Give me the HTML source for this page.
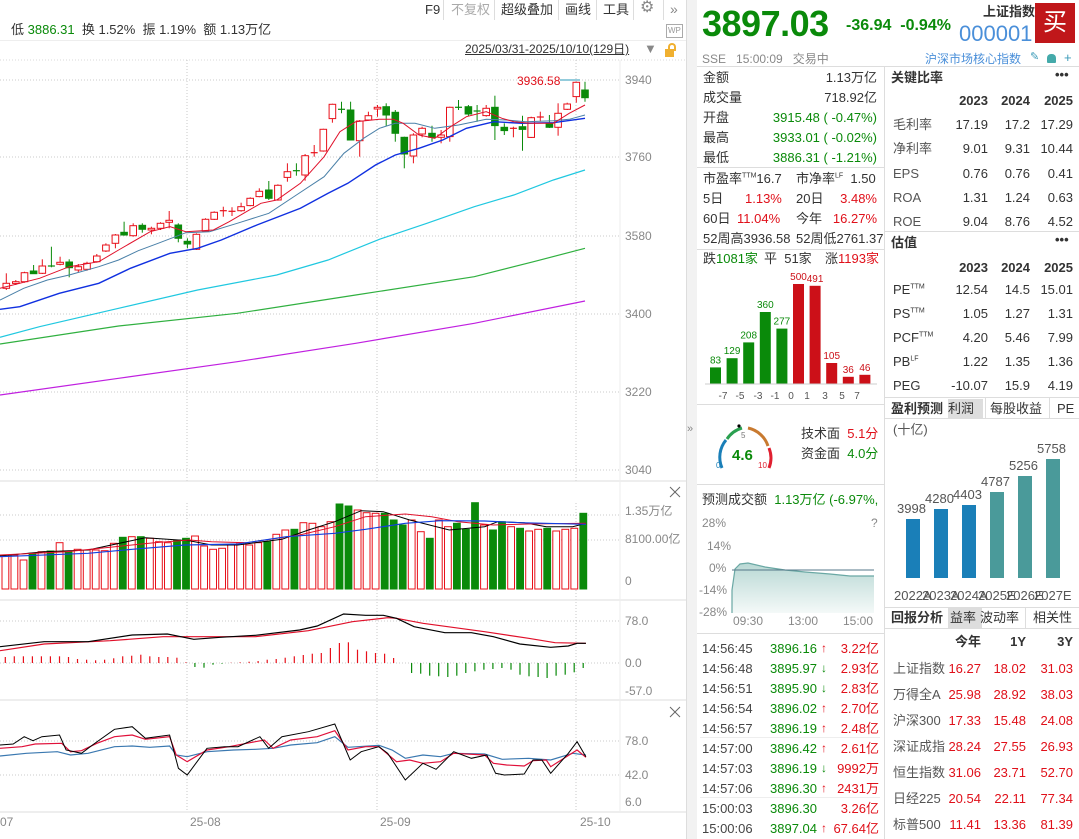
<!DOCTYPE html>
<html><head><meta charset="utf-8">
<style>
*{margin:0;padding:0;box-sizing:border-box}
body{width:1079px;height:839px;overflow:hidden;background:#fff;font-family:"Liberation Sans","Noto Sans CJK SC",sans-serif;font-size:13px;color:#333;position:relative}
.t{position:absolute;white-space:nowrap;line-height:1}
.r{text-align:right}
.g{color:#0a8a0a}.red{color:#e0101a}.gr{color:#888}
.hl{position:absolute;height:1px;background:#ddd}
.vl{position:absolute;width:1px;background:#ddd}
b{font-weight:bold}
</style></head><body>
<svg id="left" width="686" height="839" style="position:absolute;left:0;top:0"></svg>
<div style="position:absolute;left:686px;top:0;width:11px;height:839px;background:#f2f2f2;border-left:1px solid #ddd"></div>
<div class="t gr" style="left:687px;top:424px;font-size:11px">»</div>

<!-- left top text -->
<div class="t" style="left:425px;top:3px">F9</div>
<div class="t" style="left:451px;top:3px;color:#aaa">不复权</div>
<div class="t" style="left:501px;top:3px">超级叠加</div>
<div class="t" style="left:565px;top:3px">画线</div>
<div class="t" style="left:603px;top:3px">工具</div>
<div class="t gr" style="left:640px;top:0px;font-size:16px">⚙</div>
<div class="t gr" style="left:670px;top:2px;font-size:14px">»</div>
<div class="vl" style="left:443px;top:0;height:20px"></div><div class="vl" style="left:494px;top:0;height:20px"></div><div class="vl" style="left:558px;top:0;height:20px"></div><div class="vl" style="left:596px;top:0;height:20px"></div><div class="vl" style="left:633px;top:0;height:20px"></div><div class="vl" style="left:663px;top:0;height:20px"></div>
<div class="t" style="left:11px;top:23px">低 <span class="g">3886.31</span>&nbsp; 换 1.52%&nbsp; 振 1.19%&nbsp; 额 1.13万亿</div>
<div class="t" style="left:666px;top:24px;font-size:8px;color:#999;border:1px solid #aaa;padding:2px 1px">WP</div>
<div class="hl" style="left:0;top:40px;width:686px;background:#eee"></div>
<div class="t" style="left:465px;top:43px;font-size:12px;text-decoration:underline">2025/03/31-2025/10/10(129日)</div>
<div class="t" style="left:644px;top:42px;font-size:13px;color:#888">▼</div>
<div style="position:absolute;left:665px;top:49px;width:9px;height:8px;background:#f0b030"></div>
<div style="position:absolute;left:668px;top:43px;width:8px;height:8px;border:2px solid #f0b030;border-bottom:none;border-radius:4px 4px 0 0;"></div>
<div class="t red" style="left:517px;top:75px;font-size:12px">3936.58</div>
<div class="t gr" style="left:625px;top:74px;font-size:12px">3940</div>
<div class="t gr" style="left:625px;top:151px;font-size:12px">3760</div>
<div class="t gr" style="left:625px;top:230px;font-size:12px">3580</div>
<div class="t gr" style="left:625px;top:308px;font-size:12px">3400</div>
<div class="t gr" style="left:625px;top:386px;font-size:12px">3220</div>
<div class="t gr" style="left:625px;top:464px;font-size:12px">3040</div>
<div class="t gr" style="left:625px;top:505px;font-size:12px">1.35万亿</div>
<div class="t gr" style="left:625px;top:533px;font-size:12px">8100.00亿</div>
<div class="t gr" style="left:625px;top:575px;font-size:12px">0</div>
<div class="t gr" style="left:625px;top:615px;font-size:12px">78.0</div>
<div class="t gr" style="left:625px;top:657px;font-size:12px">0.0</div>
<div class="t gr" style="left:625px;top:685px;font-size:12px">-57.0</div>
<div class="t gr" style="left:625px;top:735px;font-size:12px">78.0</div>
<div class="t gr" style="left:625px;top:769px;font-size:12px">42.0</div>
<div class="t gr" style="left:625px;top:796px;font-size:12px">6.0</div>
<div class="t gr" style="left:0px;top:816px;font-size:12px">07</div>
<div class="t gr" style="left:190px;top:816px;font-size:12px">25-08</div>
<div class="t gr" style="left:380px;top:816px;font-size:12px">25-09</div>
<div class="t gr" style="left:580px;top:816px;font-size:12px">25-10</div>

<!-- right header -->
<div class="t g" style="left:702px;top:6px;font-size:36px;font-weight:bold;letter-spacing:-0.5px">3897.03</div>
<div class="t g" style="left:846px;top:18px;font-size:16px;font-weight:bold">-36.94&nbsp;&nbsp;-0.94%</div>
<div class="t" style="left:983px;top:5px;font-size:13px;font-weight:bold">上证指数</div>
<div class="t" style="left:959px;top:23px;font-size:22px;color:#4a8fd9">000001</div>
<div style="position:absolute;left:1035px;top:3px;width:40px;height:40px;background:#c0171a;color:#fff;font-size:24px;text-align:center;line-height:40px">买</div>
<div class="t gr" style="left:702px;top:53px;font-size:12px">SSE&nbsp;&nbsp; 15:00:09&nbsp;&nbsp; 交易中</div>
<div class="t" style="left:925px;top:53px;font-size:12px;color:#4a8fd9">沪深市场核心指数</div>
<div class="t" style="left:1030px;top:52px;font-size:11px;color:#3a9ab8">✎</div>
<div style="position:absolute;left:1047px;top:54px;width:9px;height:9px;background:#4aa;border-radius:4px 4px 1px 1px"></div>
<div class="t" style="left:1064px;top:51px;font-size:13px;color:#3a9ab8">+</div>
<div class="hl" style="left:697px;top:66px;width:382px"></div>
<div class="vl" style="left:884px;top:66px;height:773px"></div>

<!-- left sub-col -->
<div class="t" style="left:703px;top:71px">金额</div><div class="t r" style="right:202px;top:71px">1.13万亿</div>
<div class="t" style="left:703px;top:91px">成交量</div><div class="t r" style="right:202px;top:91px">718.92亿</div>
<div class="t" style="left:703px;top:111px">开盘</div><div class="t r g" style="right:202px;top:111px">3915.48 ( -0.47%)</div>
<div class="t" style="left:703px;top:131px">最高</div><div class="t r g" style="right:202px;top:131px">3933.01 ( -0.02%)</div>
<div class="t" style="left:703px;top:151px">最低</div><div class="t r g" style="right:202px;top:151px">3886.31 ( -1.21%)</div>
<div class="hl" style="left:697px;top:167px;width:187px"></div>
<div class="t" style="left:703px;top:172px">市盈率<sup style="font-size:7px">TTM</sup>16.7</div><div class="t" style="left:796px;top:172px">市净率<sup style="font-size:7px">LF</sup>&nbsp; 1.50</div>
<div class="t" style="left:703px;top:192px">5日</div><div class="t red" style="left:745px;top:192px">1.13%</div><div class="t" style="left:796px;top:192px">20日</div><div class="t r red" style="right:202px;top:192px">3.48%</div>
<div class="t" style="left:703px;top:212px">60日</div><div class="t red" style="left:737px;top:212px">11.04%</div><div class="t" style="left:796px;top:212px">今年</div><div class="t r red" style="right:202px;top:212px">16.27%</div>
<div class="t" style="left:703px;top:232px">52周高3936.58</div><div class="t" style="left:796px;top:232px">52周低2761.37</div>
<div class="hl" style="left:697px;top:249px;width:187px"></div>
<div class="t" style="left:703px;top:252px">跌<span class="g">1081家</span></div><div class="t" style="left:764px;top:252px">平&nbsp; 51家</div><div class="t" style="left:825px;top:252px">涨<span class="red">1193家</span></div>
<svg width="187" height="145" style="position:absolute;left:697px;top:268px" id="dist"></svg>
<div class="hl" style="left:697px;top:404px;width:187px"></div>
<svg width="70" height="70" style="position:absolute;left:712px;top:420px">
<path d="M10 48 A27 27 0 0 1 14 20" stroke="#1a7fb8" stroke-width="3" fill="none"/>
<path d="M15 19 A27 27 0 0 1 30 8" stroke="#2aa050" stroke-width="3" fill="none"/>
<path d="M36 8 A27 27 0 0 1 56 26" stroke="#c87a30" stroke-width="3" fill="none"/>
<path d="M57 28 A27 27 0 0 1 57 48" stroke="#e02030" stroke-width="3" fill="none"/>
<circle cx="27" cy="6" r="1.6" fill="#000"/>
<text x="29" y="18" font-size="8" fill="#777">5</text>
<text x="4" y="48" font-size="8" fill="#1a7fb8">0</text>
<text x="46" y="48" font-size="8" fill="#e02030">10</text>
<text x="20" y="40" font-size="15" font-weight="bold" fill="#0a8a0a" font-family="Liberation Sans">4.6</text>
</svg>
<div class="t" style="left:801px;top:427px">技术面&nbsp; <span class="red">5.1分</span></div>
<div class="t" style="left:801px;top:447px">资金面&nbsp; <span class="g">4.0分</span></div>
<div class="hl" style="left:697px;top:484px;width:187px"></div>
<div class="t" style="left:702px;top:493px">预测成交额&nbsp; <span class="g">1.13万亿 (-6.97%,</span></div>
<div class="t gr" style="left:702px;top:517px;font-size:12px">28%</div><div class="t gr" style="left:871px;top:517px;font-size:12px">?</div>
<div class="t gr" style="left:707px;top:540px;font-size:12px">14%</div>
<div class="t gr" style="left:709px;top:562px;font-size:12px">0%</div>
<div class="t gr" style="left:699px;top:584px;font-size:12px">-14%</div>
<div class="t gr" style="left:699px;top:606px;font-size:12px">-28%</div>
<svg width="150" height="60" style="position:absolute;left:730px;top:555px">
<defs><linearGradient id="ag" x1="0" y1="0" x2="0" y2="1"><stop offset="0" stop-color="#b8d8d4"/><stop offset="1" stop-color="#f4f9f8"/></linearGradient></defs>
<line x1="12" y1="15" x2="144" y2="15" stroke="#99a" stroke-width="0.6" stroke-dasharray="1 2" transform="translate(0,-23)"/>
<path d="M2 58 L2 35 L5 14 L10 9 L18 8 L35 12 L55 15 L75 17 L100 19 L120 21 L144 21 L144 58 Z" fill="url(#ag)"/>
<path d="M2 58 L2 35 L5 14 L10 9 L18 8 L35 12 L55 15 L75 17 L100 19 L120 21 L144 21" fill="none" stroke="#6aa8a4" stroke-width="1.2"/>
<line x1="2" y1="15" x2="144" y2="15" stroke="#557788" stroke-width="1"/>
</svg>
<div class="t gr" style="left:733px;top:615px;font-size:12px">09:30</div>
<div class="t gr" style="left:788px;top:615px;font-size:12px">13:00</div>
<div class="t gr" style="left:843px;top:615px;font-size:12px">15:00</div>
<div class="hl" style="left:697px;top:633px;width:187px"></div>
<div id="trades"></div>
<div class="hl" style="left:700px;top:737px;width:180px;background:#eee"></div>
<div class="hl" style="left:700px;top:797px;width:180px;background:#eee"></div>

<!-- right col -->
<div class="t" style="left:891px;top:71px;font-weight:bold">关键比率</div><div class="t" style="left:1055px;top:68px;font-weight:bold">•••</div>
<div id="rc"></div>
<div class="hl" style="left:885px;top:231px;width:194px"></div>
<div class="t" style="left:891px;top:236px;font-weight:bold">估值</div><div class="t" style="left:1055px;top:233px;font-weight:bold">•••</div>
<div class="hl" style="left:885px;top:397px;width:194px"></div>
<div style="position:absolute;left:948px;top:399px;width:35px;height:19px;background:#ddd"></div>
<div class="t" style="left:891px;top:402px;font-weight:bold">盈利预测</div><div class="t" style="left:948px;top:402px">利润</div><div class="t" style="left:990px;top:402px">每股收益</div><div class="t" style="left:1057px;top:402px">PE</div>
<div class="vl" style="left:985px;top:398px;height:20px"></div><div class="vl" style="left:1049px;top:398px;height:20px"></div>
<div class="hl" style="left:885px;top:418px;width:194px"></div>
<div class="t" style="left:893px;top:423px;color:#555">(十亿)</div>
<div id="bars"></div>
<div class="hl" style="left:885px;top:607px;width:194px"></div>
<div style="position:absolute;left:948px;top:608px;width:34px;height:20px;background:#ddd"></div>
<div class="t" style="left:891px;top:611px;font-weight:bold">回报分析</div><div class="t" style="left:950px;top:611px">益率</div><div class="t" style="left:980px;top:611px">波动率</div><div class="t" style="left:1033px;top:611px">相关性</div>
<div class="vl" style="left:1025px;top:608px;height:20px"></div>
<div class="hl" style="left:885px;top:628px;width:194px"></div>
<div id="ret"></div>

<script>
var L=document.getElementById('left'),S='';
function ln(x1,y1,x2,y2,c,w,d){S+='<line x1="'+x1+'" y1="'+y1+'" x2="'+x2+'" y2="'+y2+'" stroke="'+c+'" stroke-width="'+(w||1)+'"'+(d?' stroke-dasharray="'+d+'"':'')+'/>';}
function pl(pts,fx,fy,c,w){S+='<polyline fill="none" stroke="'+c+'" stroke-width="'+(w||1)+'" points="'+pts.map(function(p,i){return i%2==0?fx(p):fy(p)}).reduce(function(a,v,i){return a+(i%2==0?' '+v:','+v)},'')+'"/>';}
var D='1 2';
// grids
[80,157,236,314,392,470].forEach(function(y){ln(0,y,620,y,'#bbb',0.8,D)});
ln(0,60,686,60,'#ccc',0.8,D);
[187,377,576].forEach(function(x){ln(x,60,x,481,'#bbb',0.8,D);ln(x,503,x,812,'#bbb',0.8,D)});
[515,540,621,663,741,775].forEach(function(y){ln(0,y,620,y,'#bbb',0.8,D)});
[481,600,700,812].forEach(function(y){ln(0,y,686,y,'#ddd',1)});
ln(620,60,620,812,'#eee',1);
// x icons
[[675,492],[675,712]].forEach(function(p){ln(p[0]-5,p[1]-5,p[0]+5,p[1]+5,'#666',1);ln(p[0]-5,p[1]+5,p[0]+5,p[1]-5,'#666',1)});
var cx=function(v){return (v/2.53).toFixed(1)},cy=function(v){return (80+v/3).toFixed(1)};
// candles: x, bodyTop, bodyBot, wickTop, wickBot, red?
var C=[[16,610,625,580,630,1],[40,605,610,600,615,1],[62,578,605,575,608,1],[85,573,581,555,581,0],[107,558,580,538,582,1],[130,558,560,500,562,0],[152,547,553,530,556,1],[175,546,563,538,592,0],[198,560,570,552,578,1],[220,550,568,545,572,1],[245,528,545,522,548,1],[268,495,513,490,516,1],[292,465,490,462,505,1],[314,457,465,425,467,0],[337,437,467,430,470,1],[360,436,448,430,458,0],[383,445,450,440,463,1],[406,430,445,427,450,1],[428,421,427,393,445,1],[451,435,475,430,487,0],[474,484,492,475,505,0],[497,463,508,460,510,1],[520,418,453,415,455,1],[542,397,418,394,420,1],[565,392,394,380,410,1],[587,394,396,382,408,1],[610,380,392,368,395,1],[633,355,377,352,379,1],[656,334,350,325,352,1],[680,330,355,303,360,0],[703,316,360,313,362,1],[727,275,292,250,305,1],[750,272,274,250,287,0],[772,227,285,222,302,1],[795,218,222,195,230,1],[818,148,213,146,215,1],[841,73,116,71,128,1],[864,88,90,65,100,0],[887,90,180,65,180,0],[910,123,182,120,230,1],[932,107,120,95,122,1],[955,82,87,75,110,1],[977,80,105,70,138,0],[1000,97,160,90,185,0],[1023,172,222,170,265,0],[1046,165,228,160,250,1],[1068,145,162,140,172,1],[1093,160,172,137,185,0],[1116,165,172,150,190,1],[1138,82,170,80,185,1],[1160,82,86,60,90,0],[1185,80,102,75,108,0],[1207,93,97,75,125,0],[1230,85,107,75,110,1],[1252,82,137,47,180,0],[1276,142,152,130,165,0],[1299,145,148,140,172,1],[1322,140,148,107,212,0],[1344,113,172,110,174,1],[1367,111,113,95,125,1],[1390,130,142,105,144,0],[1412,100,142,70,167,1],[1435,72,88,68,90,1],[1458,7,50,5,68,1],[1480,30,53,5,65,0]];
C.forEach(function(c){var x=c[0]/2.53,col=c[5]?'#e8101a':'#0a8a0a';
ln(x.toFixed(1),cy(c[3]),x.toFixed(1),cy(c[4]),col,1);
var t=80+c[1]/3,b=80+c[2]/3,h=Math.max(b-t,1);
if(h<1.5){ln((x-3.5).toFixed(1),t.toFixed(1),(x+3.5).toFixed(1),t.toFixed(1),col,1.2)}
else S+='<rect x="'+(x-3.3).toFixed(1)+'" y="'+t.toFixed(1)+'" width="6.6" height="'+h.toFixed(1)+'" fill="'+(c[5]?'#fff':col)+'" stroke="'+col+'" stroke-width="1"/>';});
function P(a){return a}
pl([0,945,300,895,600,845,900,790,1200,730,1480,663],cx,cy,'#c020e0',1.2);
pl([0,792,300,738,600,700,900,645,1200,590,1350,545,1480,505],cx,cy,'#30b040',1.2);
pl([0,772,100,740,300,685,500,630,700,585,830,540,960,478,1080,430,1200,380,1300,345,1400,300,1480,270],cx,cy,'#20c8e0',1.2);
pl([0,688,50,680,150,640,250,610,330,565,430,520,500,505,560,480,650,435,760,385,830,340,880,310,950,255,1000,225,1060,205,1120,180,1180,145,1250,125,1320,130,1400,128,1480,115],cx,cy,'#1030e0',1.4);
pl([0,660,60,625,120,600,175,585,250,560,300,540,350,512,400,490,470,458,530,455,600,430,680,400,750,345,820,290,870,220,920,175,960,145,1000,130,1050,130,1100,145,1160,135,1230,118,1280,120,1330,125,1400,122,1440,118,1480,105],cx,cy,'#4a80a8',1);
pl([0,625,100,595,175,560,250,545,300,510,380,455,430,440,470,455,540,450,580,425,660,370,700,360,760,310,820,230,860,155,900,125,960,118,995,118,1020,130,1060,165,1100,175,1140,140,1180,110,1230,95,1270,115,1300,125,1340,130,1400,130,1440,100,1480,75],cx,cy,'#e0102a',1);
ln(560,80,580,80,'#2a9ab8',1);
// volume
var bx=function(v){return (v/2.27).toFixed(1)},by=function(v){return (470+v/3).toFixed(1)};
var V=[255,255,270,250,245,243,218,245,238,240,240,242,220,202,200,200,205,215,218,210,205,198,228,238,235,225,218,225,218,215,193,180,178,158,160,170,155,102,108,120,128,130,130,150,165,150,185,205,150,170,160,178,98,165,180,155,170,175,183,178,175,183,178,175,130,145];
C.forEach(function(c,i){var x=5.3+9.03*i-3.3,t=470+V[i]/3,col=c[5]?'#e8101a':'#0a8a0a';
S+='<rect x="'+x.toFixed(1)+'" y="'+t.toFixed(1)+'" width="6.8" height="'+(589-t).toFixed(1)+'" fill="'+(c[5]?'#fff':col)+'" stroke="'+col+'" stroke-width="1"/>';});
pl([0,258,100,245,200,240,330,203,430,212,480,225,540,225,640,208,700,180,760,155,820,122,870,125,930,150,1020,180,1100,170,1130,155,1190,158,1240,170,1300,170,1330,160],bx,by,'#000',1);
pl([0,255,150,245,250,232,350,218,430,210,480,215,560,218,680,195,760,170,830,140,920,132,980,140,1040,155,1120,165,1200,162,1330,160],bx,by,'#e0102a',1);
pl([0,260,200,250,300,238,420,225,540,222,650,200,760,190,830,178,920,160,1000,152,1100,153,1180,158,1330,163],bx,by,'#1040e0',1.2);
// macd hist
var H=[18,20,20,20,20,20,20,18,12,10,8,10,14,20,22,25,20,18,18,16,2,-12,-14,-5,-2,1,2,4,6,10,12,16,20,24,28,30,45,60,62,40,35,30,28,15,0,-30,-32,-38,-40,-42,-38,-30,-25,-20,-18,-15,-20,-35,-40,-42,-45,-38,-35,-28,-15];
H.forEach(function(h,i){var x=(5.3+9.03*i).toFixed(1);if(h)ln(x,663,x,(663-h/3).toFixed(1),h>0?'#e8101a':'#0a8a0a',1.2)});
pl([0,542,100,522,250,512,370,500,440,500,580,500,700,482,800,455,880,443,900,445,960,460,1100,485,1200,505,1260,518,1330,520],bx,by,'#e0102a',1.2);
pl([0,530,100,515,200,515,300,495,380,492,440,508,500,502,580,496,680,480,720,468,780,432,830,436,870,436,900,445,940,470,1010,488,1070,488,1120,500,1180,522,1250,532,1290,528,1310,520,1330,520],bx,by,'#000',1.2);
// kdj
pl([0,858,60,850,130,845,160,855,200,850,260,830,300,828,340,832,385,828,400,855,425,860,470,845,530,840,580,838,620,835,660,825,720,818,760,800,790,832,860,826,890,840,920,865,960,855,1000,860,1030,850,1100,852,1140,868,1200,865,1250,870,1300,850,1330,855],bx,by,'#3a78b0',1.2);
pl([0,835,50,830,80,822,140,820,160,845,185,842,220,820,260,800,300,795,330,808,385,800,400,855,425,875,470,840,520,830,560,820,600,810,620,835,660,810,720,800,760,782,790,840,830,830,860,830,900,875,930,870,960,880,1000,875,1030,850,1100,855,1120,880,1150,885,1190,888,1210,872,1240,870,1250,890,1300,848,1310,840,1330,862],bx,by,'#e0103a',1.2);
pl([0,825,30,822,55,800,75,812,95,800,135,795,150,840,185,850,210,825,260,778,300,770,330,805,385,795,405,895,425,915,470,835,510,830,540,830,590,800,610,835,640,800,700,785,760,762,795,870,820,845,860,830,880,850,920,930,960,880,990,898,1030,845,1070,865,1105,855,1125,910,1145,915,1190,912,1210,870,1230,870,1250,910,1290,850,1310,815,1330,860],bx,by,'#000',1);
L.innerHTML=S;
// dist
var d='',vals=[83,129,208,360,277,500,491,105,36,46],labs=['-7','-5','-3','-1','0','1','3','5','7'];
vals.forEach(function(v,i){var x=13+16.6*i,h=v/5,col=i<5?'#0a8a0a':'#cc1018';
d+='<rect x="'+x+'" y="'+(116-h)+'" width="11" height="'+h+'" fill="'+col+'"/><text x="'+(x+5.5)+'" y="'+(112-h)+'" font-size="10" text-anchor="middle" fill="'+col+'" font-family="Liberation Sans">'+v+'</text>';});
d+='<line x1="8" y1="116" x2="180" y2="116" stroke="#ccc"/>';
[26,43,61,78,94,110,128,145,160].forEach(function(x,i){d+='<text x="'+x+'" y="131" font-size="10" text-anchor="middle" fill="#555" font-family="Liberation Sans">'+labs[i]+'</text>'});
document.getElementById('dist').innerHTML=d;
// trades
var T=[['14:56:45','3896.16','↑','3.22亿'],['14:56:48','3895.97','↓','2.93亿'],['14:56:51','3895.90','↓','2.83亿'],['14:56:54','3896.02','↑','2.70亿'],['14:56:57','3896.19','↑','2.48亿'],['14:57:00','3896.42','↑','2.61亿'],['14:57:03','3896.19','↓','9992万'],['14:57:06','3896.30','↑','2431万'],['15:00:03','3896.30','','3.26亿'],['15:00:06','3897.04','↑','67.64亿']];
var ys=[642,662,682,702,722,742,762,782,802,822],h='';
T.forEach(function(r,i){h+='<div class="t" style="left:702px;top:'+ys[i]+'px;font-size:13px;color:#444">'+r[0]+'</div><div class="t g" style="left:770px;top:'+ys[i]+'px;width:50px;overflow:hidden">'+r[1]+'</div><div class="t" style="left:821px;top:'+ys[i]+'px;font-size:12px;font-weight:bold;color:'+(r[2]=='↑'?'#e0101a':'#0a8a0a')+'">'+r[2]+'</div><div class="t r red" style="right:200px;top:'+ys[i]+'px">'+r[3]+'</div>';});
document.getElementById('trades').innerHTML=h;
// ratios
function tab(rows,y0,dy,cols,hdr,hy,lc,vc){var s='';hdr.forEach(function(t,j){s+='<div class="t r" style="right:'+(1079-cols[j])+'px;top:'+hy+'px;font-weight:bold">'+t+'</div>'});
rows.forEach(function(r,i){s+='<div class="t" style="left:893px;top:'+(y0+dy*i)+'px;color:'+lc+'">'+r[0]+'</div>';for(var j=1;j<4;j++)s+='<div class="t r" style="right:'+(1079-cols[j-1])+'px;top:'+(y0+dy*i)+'px;color:'+vc+'">'+r[j]+'</div>'});return s;}
var rc=tab([['毛利率','17.19','17.2','17.29'],['净利率','9.01','9.31','10.44'],['EPS','0.76','0.76','0.41'],['ROA','1.31','1.24','0.63'],['ROE','9.04','8.76','4.52']],118,24.3,[988,1030,1073],['2023','2024','2025'],94,'#555','#333');
rc+=tab([['PE<sup style="font-size:7px">TTM</sup>','12.54','14.5','15.01'],['PS<sup style="font-size:7px">TTM</sup>','1.05','1.27','1.31'],['PCF<sup style="font-size:7px">TTM</sup>','4.20','5.46','7.99'],['PB<sup style="font-size:7px">LF</sup>','1.22','1.35','1.36'],['PEG','-10.07','15.9','4.19']],283,24,[988,1030,1073],['2023','2024','2025'],261,'#333','#333');
document.getElementById('rc').innerHTML=rc;
document.getElementById('ret').innerHTML=tab([['上证指数','16.27','18.02','31.03'],['万得全A','25.98','28.92','38.03'],['沪深300','17.33','15.48','24.08'],['深证成指','28.24','27.55','26.93'],['恒生指数','31.06','23.71','52.70'],['日经225','20.54','22.11','77.34'],['标普500','11.41','13.36','81.39']],662,26,[981,1026,1073],['今年','1Y','3Y'],635,'#555','#e0101a');
// bars
var B=[[906,519,'3998','2022A'],[934,509,'4280','2023A'],[962,505,'4403','2024A'],[990,492,'4787','2025E'],[1018,476,'5256','2026E'],[1046,459,'5758','2027E']],bh='';
B.forEach(function(b,i){bh+='<div style="position:absolute;left:'+b[0]+'px;top:'+b[1]+'px;width:14px;height:'+(578-b[1])+'px;background:'+(i<3?'#1a7fb8':'#4a9a9a')+'"></div><div class="t" style="left:'+(b[0]-9)+'px;top:'+(b[1]-17)+'px;color:#555">'+b[2]+'</div><div class="t" style="left:'+(b[0]-12)+'px;top:589px;color:#555">'+b[3]+'</div>'});
document.getElementById('bars').innerHTML=bh;
</script>
</body></html>
